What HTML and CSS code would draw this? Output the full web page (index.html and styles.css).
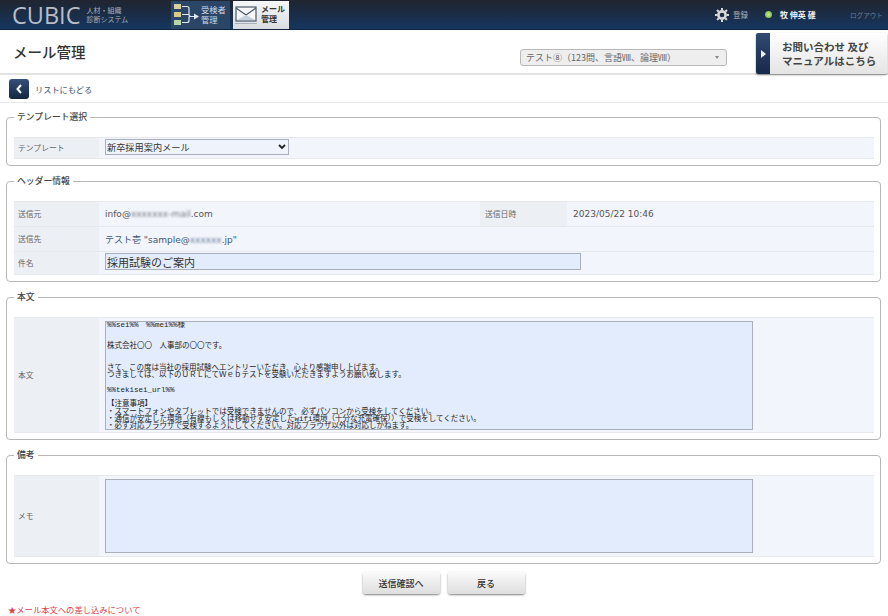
FILE: index.html
```html
<!DOCTYPE html>
<html lang="ja">
<head>
    <meta charset="UTF-8">
    <title>メール管理</title>
    <link rel="stylesheet" href="styles.css">
</head>
<body>
    <!-- top bar -->
    <header class="topbar">
        <div class="logo">
            <span class="logo-name">CUBIC</span>
            <span class="logo-sub">人材・組織<br>診断システム</span>
        </div>
        <nav class="tabs">
            <a class="tab">
                <svg width="28" height="24" viewBox="0 0 28 24">
                    <rect x="1" y="1" width="7" height="5" fill="#d8cfa0"/>
                    <rect x="1" y="9" width="7" height="5" fill="#d9c98a"/>
                    <rect x="1" y="17" width="7" height="5" fill="#b9d6a8"/>
                    <path d="M9 3.5h5q2 0 2 2v6q0 2 2 2h3M9 11.5h7M9 19.5h5q2 0 2-2v-4" fill="none" stroke="#dfe6ee" stroke-width="1.2"/>
                    <path d="M21 10.5l5 3-5 3z" fill="#dfe6ee"/>
                </svg>
                <span>受検者<br>管理</span>
            </a>
            <a class="tab tab-active">
                <svg width="22" height="20" viewBox="0 0 22 20">
                    <rect x="1" y="2" width="20" height="14" fill="#f4f6f8" stroke="#4b5a6a" stroke-width="1.2"/>
                    <path d="M1 3l10 7 10-7" fill="none" stroke="#4b5a6a" stroke-width="1.2"/>
                    <path d="M2 15l9-5 9 5z" fill="#c4d0da"/>
                    <rect x="0" y="18" width="22" height="1" fill="#a9b3bc"/>
                </svg>
                <span>メール<br>管理</span>
            </a>
        </nav>
        <div class="user-area">
            <svg class="gear" width="14" height="14" viewBox="0 0 14 14">
                <circle cx="7" cy="7" r="3.6" fill="none" stroke="#d8d8d8" stroke-width="2.6"/>
                <path d="M7 0v14M0 7h14M2 2l10 10M12 2L2 12" stroke="#d8d8d8" stroke-width="2" stroke-dasharray="2.4 9.2"/>
            </svg>
            <span class="touroku">登録</span>
            <span class="status-dot"></span>
            <span class="user-name">牧 伸英 碓</span>
            <span class="logout">ログアウト</span>
        </div>
    </header>

    <!-- title -->
    <div class="page-title">
        <h1>メール管理</h1>
        <div class="test-select">
            <span>テスト⑧（123問、言語Ⅷ、論理Ⅷ）</span>
            <i class="test-arrow"></i>
        </div>
        <a class="contact">
            <span class="contact-strip"><i></i></span>
            <span class="contact-text">お問い合わせ 及び<br>マニュアルはこちら</span>
        </a>
    </div>

    <div class="back-row">
        <a class="back-btn">
            <svg width="8" height="10" viewBox="0 0 8 10"><path d="M6 1L2.5 5 6 9" fill="none" stroke="#fff" stroke-width="2"/></svg>
        </a>
        <span>リストにもどる</span>
    </div>

    <main class="content">
        <fieldset>
            <legend>テンプレート選択</legend>
            <table>
                <colgroup><col class="col-label"><col></colgroup>
                <tr class="row-template">
                    <th>テンプレート</th>
                    <td>
                        <div class="select-wrap">
                            <select class="template-select"><option>新卒採用案内メール</option></select>
                            <svg class="select-chevron" width="8" height="6" viewBox="0 0 8 6"><path d="M1 1l3 3 3-3" fill="none" stroke="#222" stroke-width="1.8"/></svg>
                        </div>
                    </td>
                </tr>
            </table>
        </fieldset>

        <fieldset>
            <legend>ヘッダー情報</legend>
            <table>
                <colgroup><col class="col-label"><col class="col-from"><col class="col-date"><col></colgroup>
                <tr class="row-head">
                    <th>送信元</th>
                    <td>info@<span class="blur">xxxxxxx-mail</span>.com</td>
                    <th class="th-date">送信日時</th>
                    <td>2023/05/22 10:46</td>
                </tr>
                <tr class="row-head">
                    <th>送信先</th>
                    <td class="to" colspan="3">テスト壱 "sample@<span class="blur">xxxxxx</span>.jp"</td>
                </tr>
                <tr class="row-subject">
                    <th>件名</th>
                    <td colspan="3"><input class="subject" type="text" value="採用試験のご案内"></td>
                </tr>
            </table>
        </fieldset>

        <fieldset>
            <legend>本文</legend>
            <table>
                <colgroup><col class="col-label"><col></colgroup>
                <tr class="row-body">
                    <th>本文</th>
                    <td>
                        <textarea class="mail-body" readonly>%%sei%%　%%mei%%様


株式会社〇〇　人事部の〇〇です。


さて、この度は当社の採用試験へエントリーいただき、心より感謝申し上げます。
つきましては、以下のＵＲＬにてＷｅｂテストを受験いただきますようお願い致します。

%%tekisei_url%%

【注意事項】
・スマートフォンやタブレットでは受検できませんので、必ずパソコンから受検をしてください。
・通信が安定した環境（有線もしくは移動せず安定したwifi環境（十分な充電確保））で受検をしてください。
・必ず対応ブラウザで受検するようにしてください。対応ブラウザ以外は対応しかねます。</textarea>
                    </td>
                </tr>
            </table>
        </fieldset>

        <fieldset>
            <legend>備考</legend>
            <table>
                <colgroup><col class="col-label"><col></colgroup>
                <tr class="row-memo">
                    <th>メモ</th>
                    <td><textarea class="memo"></textarea></td>
                </tr>
            </table>
        </fieldset>

        <div class="actions">
            <button type="button">送信確認へ</button>
            <button type="button">戻る</button>
        </div>
        <p class="note">★メール本文への差し込みについて</p>
    </main>
</body>
</html>
```

FILE: styles.css
```css
/* base */
html, body {
    margin: 0;
    height: 616px;
    overflow: hidden;
}

body {
    background-color: #fff;
    color: #555;
    font-family: "DejaVu Sans", "Noto Sans CJK JP", sans-serif;
    font-size: 9px;
}

/* top bar */
.topbar {
    display: flex;
    height: 30px;
    box-sizing: border-box;
    background: linear-gradient(#20242f, #15365f);
    border-bottom: 1px solid #10233e;
}

.logo {
    display: flex;
    align-items: center;
    width: 171px;
    padding-left: 12px;
    box-sizing: border-box;
}

.logo-name {
    color: #b9bec6;
    font-family: "Open Sans", sans-serif;
    font-size: 23.5px;
    line-height: 28px;
}

.logo-sub {
    margin-left: 6px;
    color: #a8b0ba;
    font-family: "Liberation Sans", "Noto Sans CJK JP", sans-serif;
    font-size: 7px;
    line-height: 9px;
}

.tabs {
    display: flex;
    gap: 3px;
    align-items: flex-end;
}

.tab {
    display: flex;
    align-items: center;
    gap: 0;
    width: 59px;
    height: 28px;
    box-sizing: border-box;
    padding-left: 2px;
    background-color: #2b4566;
    color: #d4dae2;
    font-family: "Liberation Sans", "Noto Sans CJK JP", sans-serif;
    font-size: 8.3px;
    line-height: 10px;
}

.tab-active {
    width: 56px;
    gap: 4px;
    background: linear-gradient(#f6f7f8, #d9dde2);
    color: #333;
    font-size: 8px;
    font-weight: 700;
}

.user-area {
    display: flex;
    align-items: center;
    flex: 1;
    color: #a9b2be;
    font-family: "Noto Sans CJK JP", sans-serif;
}

.gear {
    margin-left: 426px;
}

.touroku {
    margin-left: 4px;
    font-size: 7.5px;
    width: 22px;
}

.status-dot {
    width: 7px;
    height: 7px;
    margin-left: 10px;
    border-radius: 50%;
    background: radial-gradient(#c8f08c, #62a83a);
}

.user-name {
    width: 70px;
    margin-left: 8px;
    color: #eef1f5;
    font-size: 8px;
    font-weight: 700;
}

.logout {
    color: #6f7c8c;
    font-size: 6.6px;
}

/* title */
.page-title {
    position: relative;
    display: flex;
    align-items: center;
    height: 45px;
    box-sizing: border-box;
    padding-left: 13px;
    border-bottom: 2px solid #e2e2e2;
}

h1 {
    margin: 0;
    width: 507px;
    color: #333;
    font-family: "Noto Sans CJK JP", sans-serif;
    font-size: 14.5px;
    font-weight: 500;
}

.test-select {
    display: flex;
    align-items: center;
    justify-content: space-between;
    width: 207px;
    height: 17px;
    margin-top: 12px;
    box-sizing: border-box;
    padding: 0 6px 0 5px;
    background-color: #eee;
    border: 1px solid #b9b9b9;
    border-radius: 3px;
    color: #666;
    font-family: "Noto Sans CJK JP", sans-serif;
    font-size: 9px;
}

.test-arrow {
    margin-right: 1px;
    border: 2px solid transparent;
    border-top: 3px solid #888;
    border-bottom: 0;
}

.contact {
    position: absolute;
    top: 3px;
    left: 756px;
    display: flex;
    width: 131px;
    height: 41px;
    background: linear-gradient(#fff, #e4e4e4);
    border-radius: 2px;
    box-shadow: 0 1px 2px rgba(0, 0, 0, 0.45);
}

.contact-strip {
    display: flex;
    align-items: center;
    justify-content: center;
    width: 14px;
    background: linear-gradient(#2f4a72, #17294a);
    border-radius: 2px 0 0 2px;
}

.contact-strip i {
    border: 4px solid transparent;
    border-left: 5px solid #eef2f6;
    border-right: 0;
}

.contact-text {
    margin: 7px 0 0 12px;
    color: #444;
    font-family: "Noto Sans CJK JP", sans-serif;
    font-size: 10.5px;
    font-weight: 700;
    line-height: 14px;
}

/* back link */
.back-row {
    display: flex;
    align-items: center;
    gap: 6px;
    height: 28px;
    box-sizing: border-box;
    padding-left: 9px;
    border-bottom: 1px solid #e8e8e8;
    color: #3b5578;
    font-family: "Noto Sans CJK JP", sans-serif;
    font-size: 8.2px;
}

.back-btn {
    display: flex;
    align-items: center;
    justify-content: center;
    width: 20px;
    height: 20px;
    background: linear-gradient(#34507c, #152640);
    border-radius: 3px;
}

/* fieldsets */
.content {
    padding: 8px 7px 0 6px;
}

fieldset {
    margin: 0 0 9px;
    min-width: 0;
    padding: 14px 6px 6px 7px;
    border: 1px solid #b6b6b6;
    border-radius: 4px;
}

legend {
    padding: 0 3px;
    color: #444;
    font-family: "Noto Sans CJK JP", sans-serif;
    font-size: 8.8px;
    font-weight: 500;
    line-height: 12px;
}

table {
    width: 100%;
    table-layout: fixed;
    border-collapse: collapse;
}

.col-label {
    width: 85px;
}

.col-from {
    width: 381px;
}

.col-date {
    width: 87px;
}

th,
td {
    padding: 0 0 0 6px;
    border-top: 1px solid #e6e8ed;
    border-bottom: 1px solid #e6e8ed;
    font-weight: 400;
    text-align: left;
}

th {
    padding: 0 0 2px 4px;
    background-color: #eceff4;
    color: #666;
    font-family: "Noto Sans CJK JP", sans-serif;
    font-size: 7.8px;
}

td {
    background-color: #f2f5fc;
}

.th-date {
    padding-left: 5px;
}

/* row height comes from the value cell */
.row-template td {
    height: 20px;
}

.row-head td {
    height: 24px;
}

.row-subject td {
    height: 22px;
}

.row-body td {
    height: 114px;
}

.row-memo td {
    height: 80px;
}

.to {
    color: #3d5578;
}

.blur {
    filter: blur(0.8px);
    opacity: 0.8;
}

/* form parts */
.select-wrap {
    position: relative;
    width: 184px;
    margin-bottom: 2px;
}

.template-select {
    display: block;
    width: 184px;
    height: 16px;
    padding: 0 0 0 1px;
    appearance: none;
    background-color: #eef3fc;
    border: 1px solid #a9b0bb;
    border-radius: 0;
    color: #333;
    font-family: "Noto Sans CJK JP", sans-serif;
    font-size: 9.2px;
}

.select-chevron {
    position: absolute;
    top: 5px;
    right: 3px;
}

.subject {
    display: block;
    width: 476px;
    height: 17px;
    margin-bottom: 3px;
    box-sizing: border-box;
    padding: 0 1px;
    background-color: #e3ecfc;
    border: 1px solid #a9b0bb;
    color: #333;
    font-family: "Noto Sans CJK JP", sans-serif;
    font-size: 11px;
}

textarea {
    display: block;
    width: 648px;
    box-sizing: border-box;
    background-color: #e3ecfc;
    border: 1px solid #a9b0bb;
    border-radius: 0;
    resize: none;
    overflow: hidden;
}

.mail-body {
    height: 109px;
    padding: 0 1px;
    color: #222;
    font-family: "Liberation Mono", "Noto Sans CJK JP", monospace;
    font-size: 7.5px;
    line-height: 7.25px;
}

.memo {
    height: 74px;
}

/* bottom */
.actions {
    display: flex;
    justify-content: center;
    gap: 8px;
    margin-top: -1px;
}

button {
    width: 77px;
    height: 22px;
    padding: 0;
    background: linear-gradient(#fafafa, #dedede);
    border: 0;
    border-radius: 3px;
    box-shadow: 0 1px 2px rgba(0, 0, 0, 0.5);
    color: #333;
    font-family: "Noto Sans CJK JP", sans-serif;
    font-size: 9px;
    font-weight: 500;
}

.note {
    margin: 9px 0 0 2px;
    color: #d8404a;
    font-family: "Noto Sans CJK JP", sans-serif;
    font-size: 8.3px;
    line-height: 12px;
}
```
